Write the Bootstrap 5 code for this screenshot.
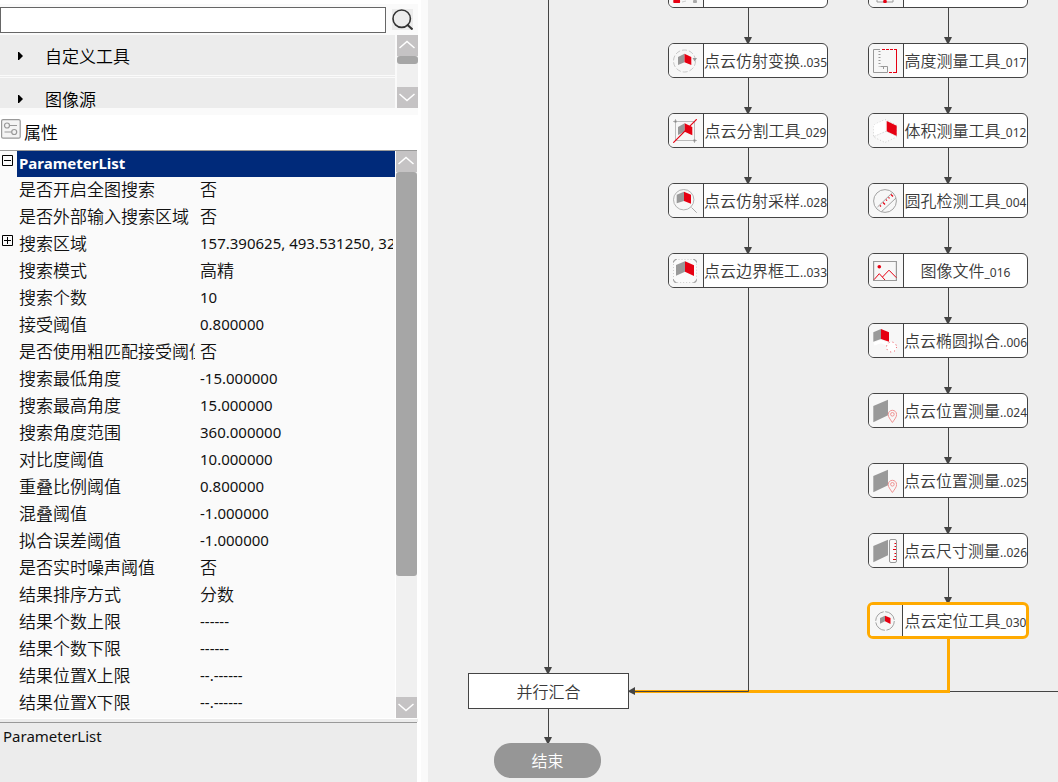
<!DOCTYPE html>
<html lang="zh-CN">
<head>
<meta charset="utf-8">
<meta name="viewport" content="width=device-width, initial-scale=1">
<title>属性</title>
<link href="https://cdn.jsdelivr.net/npm/bootstrap@5.3.0/dist/css/bootstrap.min.css" rel="stylesheet">
<style>
  body { font-family: "Noto Sans", "Noto Sans CJK SC", sans-serif; font-size: 15px; line-height: 20px; color: #111; background: #eee; }
  .cjk { font-family: "Noto Sans CJK SC", sans-serif; font-size: 17px; font-weight: 350; }

  /* left panel */
  .side { width: 428px; background: #fafafa; }
  .side-body { width: 421px; background: #fff; }
  .tools { background: #fafafa; margin: 4px 3px 0 0; padding: 3px 0 7px; }
  .find-box { width: 386px; height: 26px; border: 1px solid #666; border-radius: 0; padding: 0 4px; background: #fff; }
  .find-btn { width: 21px; height: 21px; border: 0; padding: 0; margin: 2px 0 0 6px; background: #ececec; }
  .tree { height: 73px; margin-top: 2px; }
  .tree-list { width: 395px; }
  .tree-item { height: 40px; border: 0; padding: 1px 0 0 18px; background: #ececec; color: #000; text-align: left; }
  .tree-item svg { margin-right: 22px; }
  .tree-rule { height: 3px; border-top: 1px solid #fafafa; border-bottom: 1px solid #fafafa; background: #ececec; }
  .panel-title { height: 35px; padding-left: 1px; }
  .panel-title svg { margin: 4px 3px 0 0; }
  .panel-title h2 { line-height: 20px; margin: 7px 0 0; color: #000; }

  /* scroll bars */
  .bar { width: 21px; background: #f0f0f0; }
  .bar button { height: 21px; border: 0; padding: 0; background: #c5c3c4; line-height: 0; }
  .bar-thumb { background: #a6a6a6; border-radius: 3px; }
  .thumb-short { height: 8px; }
  .thumb-long { height: 404px; }

  /* property grid */
  .props { margin: 0 4px 1px 0; border-top: 1px solid #999; height: 568px; }
  .props-scroll { width: 395px; background: #fafafa; }
  .prop-table { table-layout: fixed; width: 395px; border-collapse: separate; border-spacing: 0; }
  .prop-table td, .prop-table th { padding: 0; height: 27px; white-space: nowrap; overflow: hidden; line-height: 24px; vertical-align: top; }
  .prop-table td { font-weight: 400; }
  .prop-table td.cjk { font-weight: 350; }
  .prop-table th.cjk { border-left: 2px solid #fafafa; }
  .prop-table tr:first-child td, .prop-table tr:first-child th { height: 26px; }
  .prop-table th.group { background: #002a7a; color: #fff; font-weight: 700; padding-left: 2px; }
  .prop-table td.value { border-left: 5px solid #fafafa; border-right: 2px solid #fafafa; }
  .col-fold { width: 17px; } .col-name { width: 178px; }
  .fold { width: 11px; height: 11px; border: 0; padding: 0; margin: 4px 0 0 2px; display: block; background: none; line-height: 0; }
  .hint { margin-right: 4px; background: #ececec; border-top: 1px solid #999; padding: 3px; }
  .hint-gap { height: 3px; margin-right: 3px; background: #ececec; }

  /* flow canvas */
  .flow { background: #eee; min-height: 782px; }
  .edges { left: 0; top: 0; width: 100%; height: 100%; }
  .lane { top: -27px; width: 160px; gap: 35px; }
  .lane-a { left: 240px; } .lane-b { left: 440px; }
  .step { height: 35px; border: 1px solid #444; border-radius: 6px; background: #fff; color: #3a3a3a; }
  .step-icon { width: 35px; flex: none; padding-left: 4px; background: #f7f7f7; border-right: 1px solid #444; }
  .step-text { font-family: "Noto Sans CJK SC", sans-serif; font-size: 16px; font-weight: 350; line-height: 33px; white-space: nowrap; min-width: 0; }
  .step-text small { font-family: "Noto Sans", sans-serif; font-size: 12px; font-weight: 400; }
  .step.chosen { margin: -1px; height: 37px; border: 3px solid #fa0; }
  .step.chosen .step-icon { width: 33px; padding-left: 3px; }
  .step.chosen .step-text { margin-right: -2px; line-height: 31px; }
  .join { left: 40px; top: 673px; width: 161px; height: 36px; background: #fff; border: 1px solid #444; color: #3a3a3a; }
  .finish { left: 66px; top: 743px; width: 107px; height: 35px; border-radius: 17px; background: #969696; color: #fff; }
  .join, .finish { font-size: 16px; padding-bottom: 1px; }
</style>
</head>
<body>
<svg width="0" height="0" class="position-absolute" aria-hidden="true">
  <defs>
    <path id="up" d="M2.500 13 L10 6.500 17.500 13" fill="none" stroke="#fff" stroke-width="1.500"/>
    <path id="down" d="M2.500 7 L10 13.500 17.500 7" fill="none" stroke="#fff" stroke-width="1.500"/>
    <path id="head" d="M-3.500 -6 H4.500 L1.500 0 H-.5 Z" fill="#444"/>
  </defs>
</svg>
<div class="d-flex min-vh-100 overflow-hidden">
  <aside class="side flex-shrink-0">
    <div class="side-body d-flex flex-column min-vh-100">
      <div class="tools">
        <form class="d-flex align-items-start">
          <input class="find-box" type="text" aria-label="搜索">
          <button class="find-btn" type="button" aria-label="查找"><svg class="d-block" width="21" height="21" viewBox="0 0 21 21" fill="none" stroke="#333" stroke-width="1.600"><circle cx="9.700" cy="9.700" r="8.700"/><path d="M15 15.500 L20.500 20.500" stroke-width="2"/></svg></button>
        </form>
        <div class="tree d-flex justify-content-between overflow-hidden">
          <div class="tree-list overflow-hidden">
            <button type="button" class="tree-item cjk w-100 d-flex align-items-center"><svg width="5" height="8"><path d="M0 0H1L5 4L1 8H0Z"/></svg>自定义工具</button>
            <div class="tree-rule"></div>
            <button type="button" class="tree-item cjk w-100 d-flex align-items-center"><svg width="5" height="8"><path d="M0 0H1L5 4L1 8H0Z"/></svg>图像源</button>
          </div>
          <div class="bar d-flex flex-column">
            <button type="button" aria-label="向上"><svg width="21" height="21"><use href="#up"/></svg></button>
            <div class="bar-thumb thumb-short"></div>
            <button type="button" class="mt-auto" aria-label="向下"><svg width="21" height="21"><use href="#down"/></svg></button>
          </div>
        </div>
      </div>
      <div class="panel-title d-flex">
        <svg width="20" height="20" viewBox="0 0 20 20" fill="none" stroke="#999" stroke-width="1.200"><rect x=".6" y=".6" width="18.600" height="18.600" rx="1.500" fill="#f4f4f4"/><circle cx="6" cy="6.500" r="2.500"/><path d="M8.500 6.500 H16 M3.500 13 H10.500"/><circle cx="13.200" cy="13" r="2.500"/></svg>
        <h2 class="cjk">属性</h2>
      </div>
      <div class="props d-flex justify-content-between">
        <div class="props-scroll overflow-hidden">
          <table class="prop-table">
            <colgroup><col class="col-fold"><col class="col-name"><col></colgroup>
            <tbody>
              <tr><td><button type="button" class="fold" aria-label="折叠"><svg width="11" height="11" fill="none" stroke="#000"><path d="M.5 .5H10.500V10.500H.5Z M2 5.500H9"/></svg></button></td><th class="group" colspan="2">ParameterList</th></tr>
              <tr><td></td><th class="cjk">是否开启全图搜索</th><td class="value cjk">否</td></tr>
              <tr><td></td><th class="cjk">是否外部输入搜索区域</th><td class="value cjk">否</td></tr>
              <tr><td><button type="button" class="fold" aria-label="展开"><svg width="11" height="11" fill="none" stroke="#000"><path d="M.5 .5H10.500V10.500H.5Z M2 5.500H9 M5.500 2V9"/></svg></button></td><th class="cjk">搜索区域</th><td class="value">157.390625, 493.531250, 32</td></tr>
              <tr><td></td><th class="cjk">搜索模式</th><td class="value cjk">高精</td></tr>
              <tr><td></td><th class="cjk">搜索个数</th><td class="value">10</td></tr>
              <tr><td></td><th class="cjk">接受阈值</th><td class="value">0.800000</td></tr>
              <tr><td></td><th class="cjk">是否使用粗匹配接受阈值</th><td class="value cjk">否</td></tr>
              <tr><td></td><th class="cjk">搜索最低角度</th><td class="value">-15.000000</td></tr>
              <tr><td></td><th class="cjk">搜索最高角度</th><td class="value">15.000000</td></tr>
              <tr><td></td><th class="cjk">搜索角度范围</th><td class="value">360.000000</td></tr>
              <tr><td></td><th class="cjk">对比度阈值</th><td class="value">10.000000</td></tr>
              <tr><td></td><th class="cjk">重叠比例阈值</th><td class="value">0.800000</td></tr>
              <tr><td></td><th class="cjk">混叠阈值</th><td class="value">-1.000000</td></tr>
              <tr><td></td><th class="cjk">拟合误差阈值</th><td class="value">-1.000000</td></tr>
              <tr><td></td><th class="cjk">是否实时噪声阈值</th><td class="value cjk">否</td></tr>
              <tr><td></td><th class="cjk">结果排序方式</th><td class="value cjk">分数</td></tr>
              <tr><td></td><th class="cjk">结果个数上限</th><td class="value">------</td></tr>
              <tr><td></td><th class="cjk">结果个数下限</th><td class="value">------</td></tr>
              <tr><td></td><th class="cjk">结果位置X上限</th><td class="value">--.------</td></tr>
              <tr><td></td><th class="cjk">结果位置X下限</th><td class="value">--.------</td></tr>
            </tbody>
          </table>
        </div>
        <div class="bar d-flex flex-column">
          <button type="button" aria-label="向上"><svg width="21" height="21"><use href="#up"/></svg></button>
          <div class="bar-thumb thumb-long"></div>
          <button type="button" class="mt-auto" aria-label="向下"><svg width="21" height="21"><use href="#down"/></svg></button>
        </div>
      </div>
      <div class="hint-gap"></div>
      <div class="hint flex-grow-1">ParameterList</div>
    </div>
  </aside>

  <main class="flow position-relative flex-grow-1 overflow-hidden">
    <svg class="edges position-absolute" fill="none" stroke="#444">
      <path d="M520.500 691.500 H3000 M120.500 0 V673 M120.500 709 V743 M520.500 0 V603"/>
      <path d="M520.500 638 V691.500 H204" stroke="#fa0" stroke-width="3"/>
      <path d="M320.500 0 V691.500 H204"/>
      <g stroke="none">
        <use href="#head" x="119.500" y="673"/><use href="#head" x="119.500" y="743"/>
        <use href="#head" x="319.500" y="43"/><use href="#head" x="319.500" y="113"/><use href="#head" x="319.500" y="183"/><use href="#head" x="319.500" y="253"/>
        <use href="#head" x="519.500" y="43"/><use href="#head" x="519.500" y="113"/><use href="#head" x="519.500" y="183"/><use href="#head" x="519.500" y="253"/><use href="#head" x="519.500" y="323"/><use href="#head" x="519.500" y="393"/><use href="#head" x="519.500" y="463"/><use href="#head" x="519.500" y="533"/><use href="#head" x="519.500" y="603"/>
        <path d="M201 690.500 L207 687 V695 L201 692Z" fill="#444"/>
      </g>
    </svg>

    <div class="lane lane-a position-absolute d-flex flex-column">
      <div class="step d-flex overflow-hidden">
        <div class="step-icon d-flex align-items-center"><svg width="24" height="24"><circle cx="3.700" cy="22.300" r="3.400" fill="#e60012"/><path d="M9 23L13 22" stroke="#ccc"/><circle cx="22" cy="22.500" r="2" fill="#aaa"/></svg></div>
      </div>
      <div class="step d-flex overflow-hidden">
        <div class="step-icon d-flex align-items-center"><svg width="24" height="24"><circle cx="11.500" cy="12" r="11" fill="none" stroke="#bbb" stroke-width=".8" stroke-dasharray="5 2"/><path d="M5 8L11.500 4.700V13.300L5 16Z" fill="#999"/><path d="M11.500 4.700L18.300 8V16L11.500 13.300Z" fill="#e60012"/><path d="M19.500 9H24L21.700 12.500Z" fill="#999"/></svg></div>
        <div class="step-text flex-grow-1 text-center">点云仿射变换<small>..035</small></div>
      </div>
      <div class="step d-flex overflow-hidden">
        <div class="step-icon d-flex align-items-center"><svg width="24" height="24"><path d="M0 2.500H21.500V24M2.500 0V21.500H24" fill="none" stroke="#bbb"/><path d="M1.500 1.500h2v2h-2zM20.500 20.500h2v2h-2z" fill="#888"/><path d="M5 8L11.700 4.300V12.700L5 16Z" fill="#999"/><path d="M11.700 4.300L19.300 8V16.300L11.700 12.700Z" fill="#e60012"/><path d="M.3 23.700L23.700 .3" stroke="#e60012" stroke-width="1.200"/></svg></div>
        <div class="step-text flex-grow-1 text-center">点云分割工具<small>_029</small></div>
      </div>
      <div class="step d-flex overflow-hidden">
        <div class="step-icon d-flex align-items-center"><svg width="24" height="24"><circle cx="10.700" cy="10.700" r="10.200" fill="none" stroke="#aaa" stroke-width=".9"/><path d="M18.500 18.500L23.700 23.700" stroke="#aaa"/><path d="M3.700 5.700L11 2.700V12L3.700 14.300Z" fill="#999"/><path d="M11 2.700L18 5.700V14.700L11 12Z" fill="#e60012"/></svg></div>
        <div class="step-text flex-grow-1 text-center">点云仿射采样<small>..028</small></div>
      </div>
      <div class="step d-flex overflow-hidden">
        <div class="step-icon d-flex align-items-center"><svg width="24" height="24"><rect x=".5" y=".5" width="23" height="23" rx="2" fill="#fafafa" stroke="#ccc" stroke-dasharray="1 2"/><path d="M.5 3.500Q.5 .5 3.500 .5M20.500 .5Q23.500 .5 23.500 3.500M.5 20.500Q.5 23.500 3.500 23.500M20.500 23.500Q23.500 23.500 23.500 20.500" fill="none" stroke="#888"/><path d="M3 6L12 2.300V12.700L3 16.700Z" fill="#999"/><path d="M12 2.300L21 6.300V17L12 12.700Z" fill="#e60012"/></svg></div>
        <div class="step-text flex-grow-1 text-center">点云边界框工<small>..033</small></div>
      </div>
    </div>

    <div class="lane lane-b position-absolute d-flex flex-column">
      <div class="step d-flex overflow-hidden">
        <div class="step-icon d-flex align-items-center"><svg width="24" height="24"><path d="M4 18V23H20V18" fill="none" stroke="#999"/><path d="M12 18V22" stroke="#e60012"/><circle cx="12" cy="22.500" r="1.800" fill="#e60012"/></svg></div>
      </div>
      <div class="step d-flex overflow-hidden">
        <div class="step-icon d-flex align-items-center"><svg width="24" height="24" fill="none"><path d="M7 .5H.5V23.500H14.500V17.500H7.500M10.500 17.500V20" stroke="#999"/><path d="M6.500 2V17.500" stroke="#999" stroke-width="2" stroke-dasharray="1 2"/><path d="M9 .5H23.500" stroke="#e60012" stroke-dasharray="3 1"/><path d="M23.500 0V24" stroke="#e60012"/><path d="M16 23.500H23.500" stroke="#e60012" stroke-dasharray="3 1"/></svg></div>
        <div class="step-text flex-grow-1 text-center">高度测量工具<small>_017</small></div>
      </div>
      <div class="step d-flex overflow-hidden">
        <div class="step-icon d-flex align-items-center"><svg width="24" height="24"><path d="M12 .5L23.500 6V18L12 23.500L.5 18V6Z" fill="#fafafa" stroke="#ccc" stroke-dasharray="1 2"/><path d="M.5 6L12 1V12.500L1 17.500Z" fill="#fff"/><path d="M1 17.500L13 12.300L23 17" fill="none" stroke="#ddd" stroke-dasharray="2 1"/><path d="M13.700 2L23.700 6.700V17L13.700 12.300Z" fill="#e60012"/></svg></div>
        <div class="step-text flex-grow-1 text-center">体积测量工具<small>_012</small></div>
      </div>
      <div class="step d-flex overflow-hidden">
        <div class="step-icon d-flex align-items-center"><svg width="24" height="24" fill="none"><circle cx="12" cy="12" r="11.400" stroke="#999" stroke-width=".9"/><path d="M4.500 18L18.700 4.300M8.700 22.500L23 9" stroke="#999" stroke-width=".9"/><path d="M7 16.500L8 17.500M10 13.500L12 15.500M13 10.700L14 11.700M15.500 8.300L16.500 9.300M18 5.500L20 7.500" stroke="#e60012" stroke-width="1.200"/></svg></div>
        <div class="step-text flex-grow-1 text-center">圆孔检测工具<small>_004</small></div>
      </div>
      <div class="step d-flex overflow-hidden">
        <div class="step-icon d-flex align-items-center"><svg width="24" height="24" fill="none"><path d="M.6 2.500H23.400V21.500H.6Z" stroke="#999" stroke-width="1.200"/><circle cx="6.300" cy="7.700" r="1.800" fill="#e60012"/><path d="M1 20.700L6.300 14.700L12 21M9.500 18L16 11.200L23.400 18.700" stroke="#e60012"/></svg></div>
        <div class="step-text flex-grow-1 text-center">图像文件<small>_016</small></div>
      </div>
      <div class="step d-flex overflow-hidden">
        <div class="step-icon d-flex align-items-center"><svg width="24" height="24"><path d="M.3 3.300L8 0V10L.3 12.700Z" fill="#999"/><path d="M8 0L16 3.300V12.700L8 10Z" fill="#e60012"/><path d="M1 15L8 12.500L14 15" fill="none" stroke="#fff" stroke-width="3"/><circle cx="18.500" cy="18" r="5" fill="#fff" stroke="#e60012" stroke-width=".7" stroke-dasharray="1 3"/></svg></div>
        <div class="step-text flex-grow-1 text-center">点云椭圆拟合<small>..006</small></div>
      </div>
      <div class="step d-flex overflow-hidden">
        <div class="step-icon d-flex align-items-center"><svg width="24" height="24"><path d="M.3 7L15 .7V16.300L.3 23.300Z" fill="#999"/><g fill="none" stroke="#e88" stroke-width=".9"><path d="M19.400 23.500C17 20 15.200 18 15.200 15.500A4.200 4.200 0 0 1 23.600 15.500C23.600 18 21.800 20 19.400 23.500Z"/><circle cx="19.400" cy="15.300" r="1.800"/></g></svg></div>
        <div class="step-text flex-grow-1 text-center">点云位置测量<small>..024</small></div>
      </div>
      <div class="step d-flex overflow-hidden">
        <div class="step-icon d-flex align-items-center"><svg width="24" height="24"><path d="M.3 7L15 .7V16.300L.3 23.300Z" fill="#999"/><g fill="none" stroke="#e88" stroke-width=".9"><path d="M19.400 23.500C17 20 15.200 18 15.200 15.500A4.200 4.200 0 0 1 23.600 15.500C23.600 18 21.800 20 19.400 23.500Z"/><circle cx="19.400" cy="15.300" r="1.800"/></g></svg></div>
        <div class="step-text flex-grow-1 text-center">点云位置测量<small>..025</small></div>
      </div>
      <div class="step d-flex overflow-hidden">
        <div class="step-icon d-flex align-items-center"><svg width="24" height="24"><path d="M.3 7L15 .7V16.300L.3 23.300Z" fill="#999"/><rect x="16.500" y=".5" width="7" height="23" rx="1.500" fill="#fafafa" stroke="#999"/><path d="M21.500 4.500H23M21.500 7.500H23M20 10.500H23M21.500 14.500H23M21.500 17.500H23M20 20.500H23" stroke="#e60012"/></svg></div>
        <div class="step-text flex-grow-1 text-center">点云尺寸测量<small>..026</small></div>
      </div>
      <div class="step chosen d-flex overflow-hidden">
        <div class="step-icon d-flex align-items-center"><svg width="24" height="24"><circle cx="12" cy="12" r="9.300" fill="none" stroke="#999" stroke-width=".9" stroke-dasharray="13 1.600"/><path d="M7 9L12 6.700V12.300L7 14.700Z" fill="#999"/><path d="M12 6.700L17.500 9V15L12 12.300Z" fill="#e60012"/></svg></div>
        <div class="step-text flex-grow-1 text-center">点云定位工具<small>_030</small></div>
      </div>
    </div>

    <div class="join cjk position-absolute d-flex align-items-center justify-content-center">并行汇合</div>
    <div class="finish cjk position-absolute d-flex align-items-center justify-content-center">结束</div>
  </main>
</div>
<script src="https://cdn.jsdelivr.net/npm/bootstrap@5.3.0/dist/js/bootstrap.bundle.min.js"></script>
</body>
</html>
